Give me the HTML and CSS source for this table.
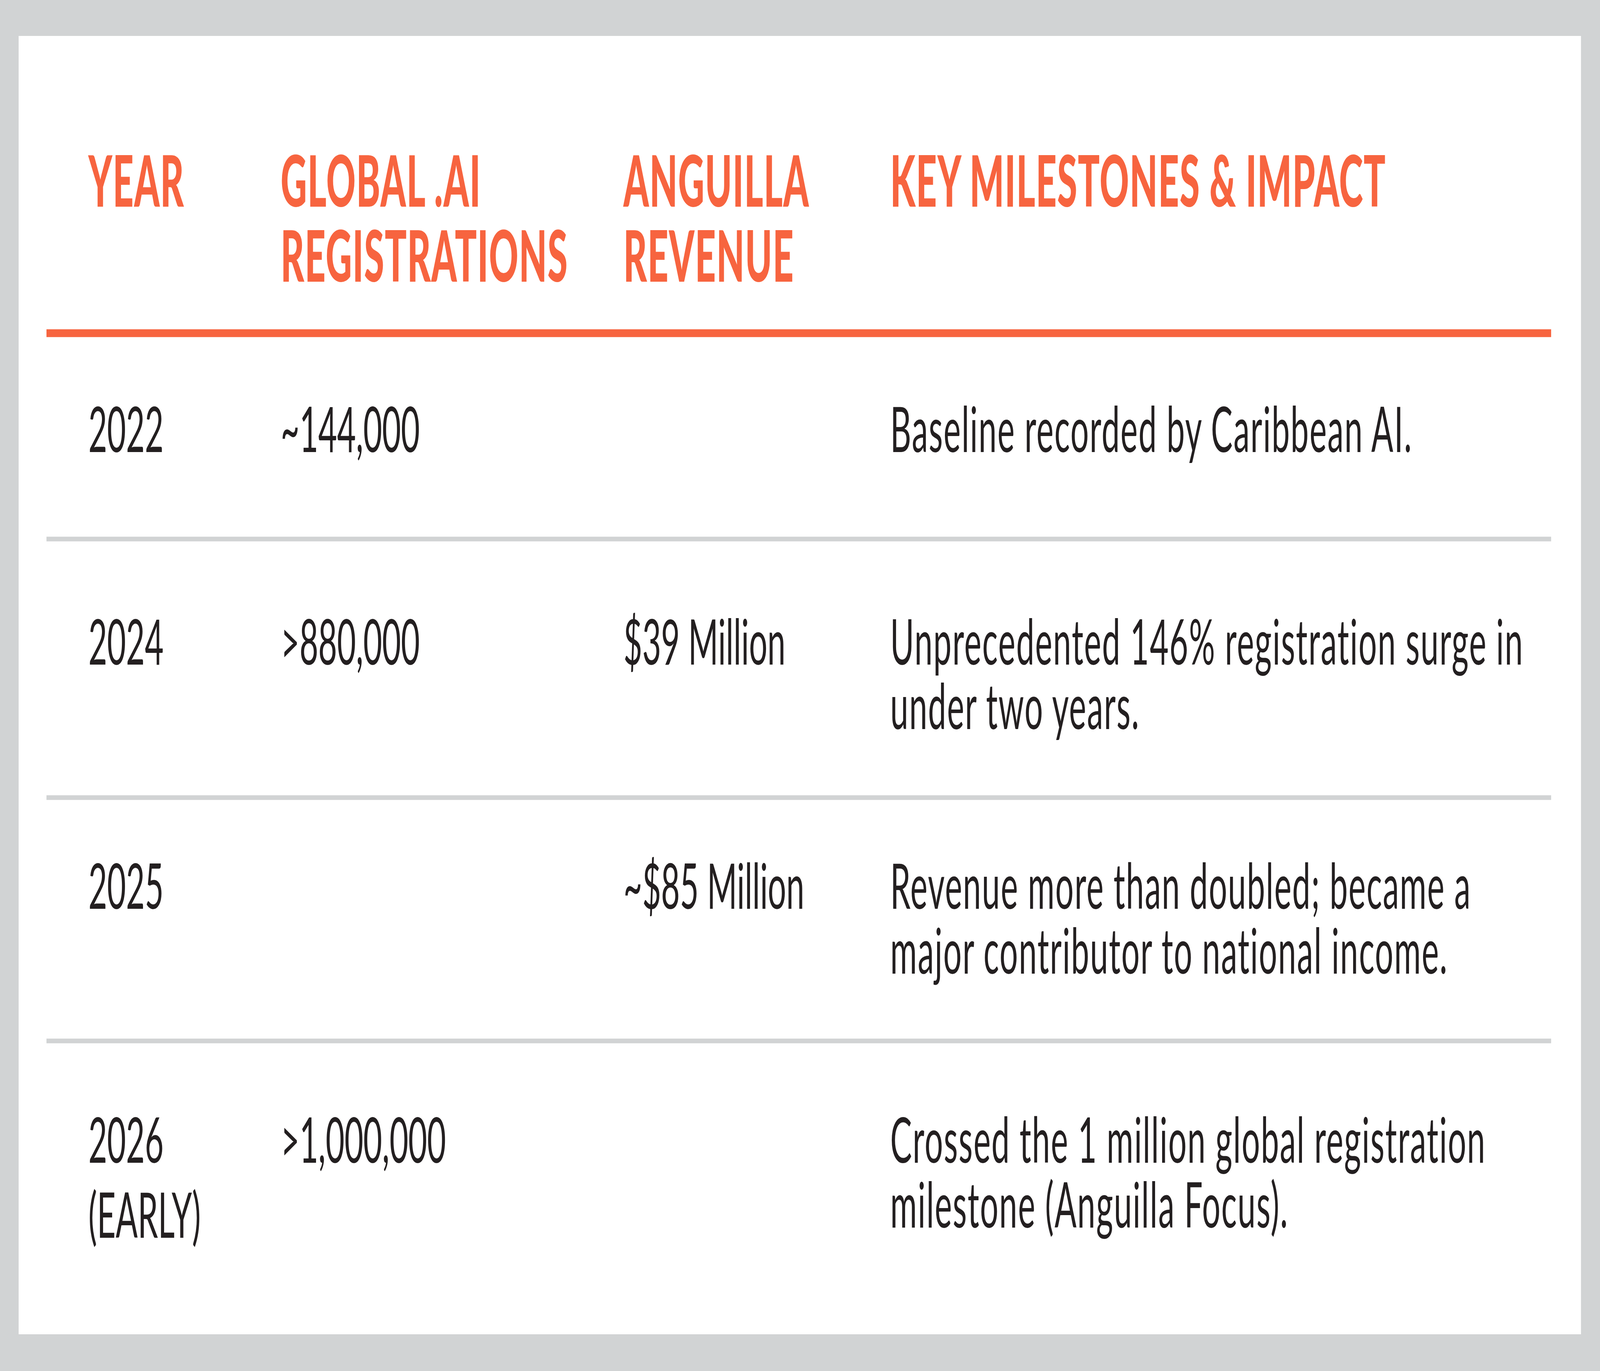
FILE: index.html
```html
<!DOCTYPE html>
<html lang="en">
<head>
<meta charset="utf-8">
<title>.AI Registrations and Anguilla Revenue</title>
<link rel="stylesheet" href="styles.css">
</head>
<body>
<div class="viewport">
  <div class="stage">
    <main class="card">
      <div class="row head">
        <div class="cell">YEAR</div>
        <div class="cell">GLOBAL .AI<br>REGISTRATIONS</div>
        <div class="cell">ANGUILLA<br>REVENUE</div>
        <div class="cell">KEY MILESTONES &amp; IMPACT</div>
      </div>
      <div class="row body r1">
        <div class="cell year">2022</div>
        <div class="cell">~144,000</div>
        <div class="cell"></div>
        <div class="cell note">Baseline recorded by Caribbean AI.</div>
      </div>
      <div class="row body r2">
        <div class="cell year">2024</div>
        <div class="cell">&gt;880,000</div>
        <div class="cell">$39 Million</div>
        <div class="cell note">Unprecedented 146% registration surge in under two years.</div>
      </div>
      <div class="row body r3">
        <div class="cell year">2025</div>
        <div class="cell"></div>
        <div class="cell">~$85 Million</div>
        <div class="cell note">Revenue more than doubled; became a major contributor to national income.</div>
      </div>
      <div class="row body r4">
        <div class="cell year">2026<br>(EARLY)</div>
        <div class="cell">&gt;1,000,000</div>
        <div class="cell"></div>
        <div class="cell note">Crossed the 1 million global registration milestone (Anguilla Focus).</div>
      </div>
    </main>
  </div>
</div>
<script src="fit.js"></script>
</body>
</html>
```

FILE: fit.js
```js
(function () {
  var root = document.documentElement;
  function fit() {
    var w = Math.max(1, window.innerWidth - 1);
    var h = Math.max(1, window.innerHeight - 1);
    root.style.setProperty('--sx', String(w / 7985));
    root.style.setProperty('--sy', String(h / 3509));
  }
  fit();
  window.addEventListener('resize', fit);
})();
```

FILE: styles.css
```css
html, body {
  margin: 0;
  padding: 0;
}

html {
  background: #d1d3d4;
}

body {
  font-family: "Lato", "Liberation Sans", sans-serif;
  color: #231f20;
}

.viewport {
  width: 100vw;
  height: 100vh;
  overflow: hidden;
}

.stage {
  width: 7985px;
  height: 3509px;
  box-sizing: border-box;
  padding: 92px 93px;
  background: #d1d3d4;
  transform-origin: 0 0;
  transform: scale(var(--sx, 1), var(--sy, 1));
}

.card {
  background: #ffffff;
  padding: 0 149px 0 139px;
}

.row {
  display: grid;
  grid-template-columns: 960px 1711px 1332px 1fr;
  padding-left: 209px;
  padding-right: 110px;
}

.head {
  font-weight: 900;
  font-size: 181px;
  line-height: 192px;
  letter-spacing: 3px;
  color: #f7643f;
  padding-top: 271px;
  padding-bottom: 96px;
  border-bottom: 20px solid #f7643f;
}

.body {
  font-size: 162px;
  line-height: 166px;
  align-items: first baseline;
  border-bottom: 12px solid #d1d3d4;
}

.body .year {
  line-height: 192px;
}

.body .note {
  letter-spacing: 4px;
}

.r1 { padding-top: 136px; padding-bottom: 183px; }
.r2 { padding-top: 157px; padding-bottom: 148px; }
.r3 { padding-top: 121px; padding-bottom: 145px; }
.r4 { padding-top: 148px; padding-bottom: 213px; border-bottom: none; }
```
